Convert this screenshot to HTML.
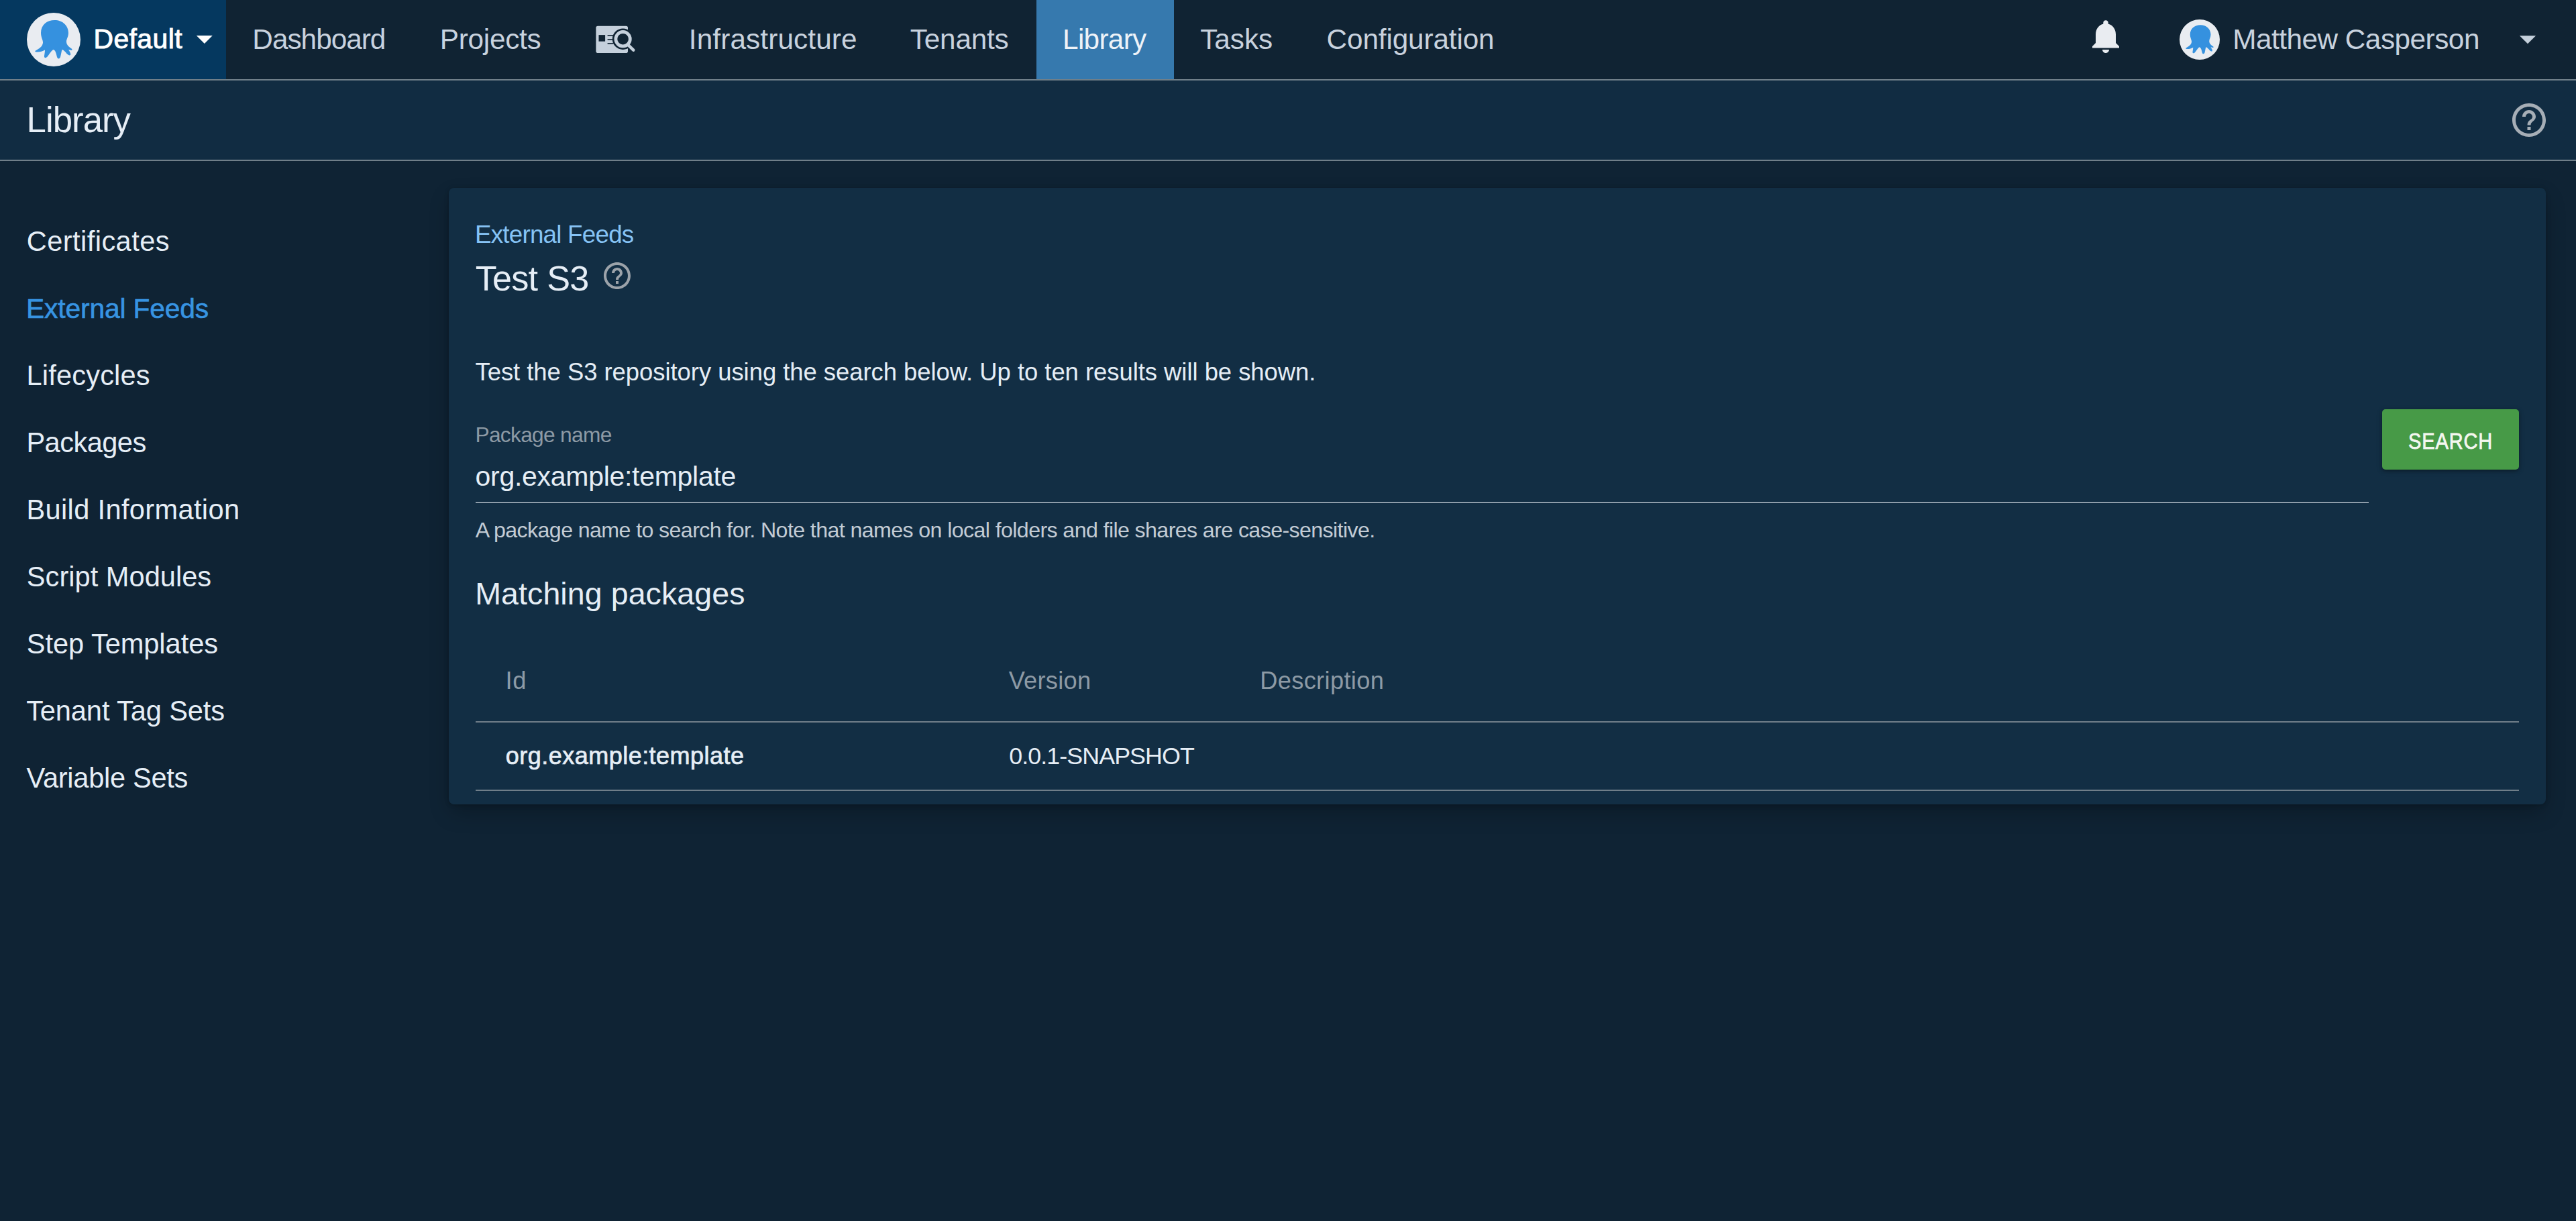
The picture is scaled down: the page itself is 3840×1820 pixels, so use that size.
<!DOCTYPE html>
<html><head><meta charset="utf-8"><title>Library - External Feeds - Test S3</title>
<style>
html,body{margin:0;padding:0;}
body{width:3840px;height:1820px;overflow:hidden;background:#0f2334;position:relative;font-family:"Liberation Sans",sans-serif;}
.t{position:absolute;white-space:pre;font-family:"Liberation Sans",sans-serif;}
svg{position:absolute;display:block;}
</style></head><body>
<div style="position:absolute;left:0px;top:0px;width:3840px;height:118px;background:#102333;"></div>
<div style="position:absolute;left:0px;top:118px;width:3840px;height:2px;background:#707f89;"></div>
<div style="position:absolute;left:0px;top:0px;width:337px;height:118px;background:#05385f;"></div>
<div style="position:absolute;left:1545px;top:0px;width:205px;height:118px;background:#3679ae;"></div>
<div style="position:absolute;left:0px;top:120px;width:3840px;height:118px;background:#112c42;"></div>
<div style="position:absolute;left:0px;top:238px;width:3840px;height:2px;background:#707f89;"></div>
<div style="position:absolute;left:669px;top:280px;width:3126px;height:919px;background:#122e44;border-radius:8px;box-shadow:0 1px 6px rgba(0,0,0,0.22),0 14px 32px -4px rgba(0,0,0,0.28);"></div>
<div style="position:absolute;left:709px;top:748px;width:2822px;height:2px;background:#8e9daa;"></div>
<div style="position:absolute;left:3551px;top:610px;width:204px;height:90px;background:#479a47;border-radius:5px;box-shadow:0 2px 5px rgba(0,0,0,0.3),0 2px 10px rgba(0,0,0,0.15);"></div>
<div style="position:absolute;left:709px;top:1075px;width:3046px;height:2px;background:#6f7e89;"></div>
<div style="position:absolute;left:709px;top:1177px;width:3046px;height:2px;background:#6f7e89;"></div>
<svg style="left:40px;top:19px" width="80" height="80" viewBox="0 0 80 80"><circle cx="40" cy="40" r="40" fill="#e9ecf1"/><path d="M21 30C21 18 30 11 41.5 11C53 11 62 19 62 30C62 36 59 39 59 43C59 48 63 51 66 53C68 54.5 68 56 66.5 56L62 55C64 58 66 61 65 63C63 64.5 60 62 58 59C56 57 54 55 52.5 55C51.5 58 51 62 50 66C49 69 46 69.5 45 66C44 62 43 56 39.6 55C37 56 34 61 31 65C28.5 68 25.5 68 26 64C26.5 61 27 58 27 55.5C23 57.5 19 59 14 58.5C11.5 58 12 57 14 56C18 53.5 23 51 24 45C24.5 41 21 37 21 30Z" fill="#3591df"/></svg>
<svg style="left:276.2px;top:29px" width="57.6" height="57.6" viewBox="0 0 24 24"><path d="M7 10l5 5 5-5z" fill="#ffffff"/></svg>
<svg style="left:880px;top:30px" width="75" height="60" viewBox="880 30 75 60">
<rect x="888.4" y="38.8" width="47.6" height="40.3" rx="2.8" fill="#c5d0dc"/>
<rect x="892.5" y="52.1" width="9.6" height="9.6" fill="#102333"/>
<rect x="905.6" y="52.1" width="9" height="1.6" fill="#102333"/>
<rect x="905.6" y="58.2" width="9" height="1.6" fill="#102333"/>
<rect x="905.6" y="64.1" width="9" height="1.6" fill="#102333"/>
<line x1="937" y1="68" x2="944.2" y2="74.6" stroke="#102333" stroke-width="8" stroke-linecap="round"/>
<circle cx="928.6" cy="58.2" r="15.8" fill="#102333"/>
<circle cx="928.6" cy="58.2" r="10.7" fill="none" stroke="#c5d0dc" stroke-width="4.8"/>
<line x1="936.5" y1="67.2" x2="944.2" y2="74.6" stroke="#c5d0dc" stroke-width="4.6" stroke-linecap="round"/>
</svg>
<svg style="left:3109px;top:23.75px" width="60" height="60" viewBox="0 0 24 24"><path d="M12 22c1.1 0 2-.9 2-2h-4c0 1.1.89 2 2 2zm6-6v-5c0-3.07-1.64-5.64-4.5-6.32V4c0-.83-.67-1.5-1.5-1.5s-1.5.67-1.5 1.5v.68C7.63 5.36 6 7.92 6 11v5l-2 2v1h16v-1l-2-2z" fill="#e9ecf1"/></svg>
<svg style="left:3249px;top:29px" width="60" height="60" viewBox="0 0 80 80"><circle cx="40" cy="40" r="40" fill="#e9ecf1"/><path d="M21 30C21 18 30 11 41.5 11C53 11 62 19 62 30C62 36 59 39 59 43C59 48 63 51 66 53C68 54.5 68 56 66.5 56L62 55C64 58 66 61 65 63C63 64.5 60 62 58 59C56 57 54 55 52.5 55C51.5 58 51 62 50 66C49 69 46 69.5 45 66C44 62 43 56 39.6 55C37 56 34 61 31 65C28.5 68 25.5 68 26 64C26.5 61 27 58 27 55.5C23 57.5 19 59 14 58.5C11.5 58 12 57 14 56C18 53.5 23 51 24 45C24.5 41 21 37 21 30Z" fill="#3591df"/></svg>
<svg style="left:3739px;top:29px" width="58" height="58" viewBox="0 0 24 24"><path d="M7 10l5 5 5-5z" fill="#c5d0dc"/></svg>
<svg style="left:3740px;top:149px" width="60" height="60" viewBox="0 0 24 24"><path d="M11 18h2v-2h-2v2zm1-16C6.48 2 2 6.48 2 12s4.48 10 10 10 10-4.48 10-10S17.52 2 12 2zm0 18c-4.41 0-8-3.59-8-8s3.59-8 8-8 8 3.59 8 8-3.59 8-8 8zm0-14c-2.21 0-4 1.79-4 4h2c0-1.1.9-2 2-2s2 .9 2 2c0 2-3 1.75-3 5h2c0-2.25 3-2.5 3-5 0-2.21-1.79-4-4-4z" fill="#a6aeb6"/></svg>
<svg style="left:896px;top:387px" width="48" height="48" viewBox="0 0 24 24"><path d="M11 18h2v-2h-2v2zm1-16C6.48 2 2 6.48 2 12s4.48 10 10 10 10-4.48 10-10S17.52 2 12 2zm0 18c-4.41 0-8-3.59-8-8s3.59-8 8-8 8 3.59 8 8-3.59 8-8 8zm0-14c-2.21 0-4 1.79-4 4h2c0-1.1.9-2 2-2s2 .9 2 2c0 2-3 1.75-3 5h2c0-2.25 3-2.5 3-5 0-2.21-1.79-4-4-4z" fill="#9ca3aa"/></svg>
<div class="t" style="left:139.47px;top:38.45px;font-size:40.8px;line-height:40.8px;letter-spacing:0.469px;color:#ffffff;font-weight:400;-webkit-text-stroke:1.0px #ffffff;">Default</div>
<div class="t" style="left:376.36px;top:38.0px;font-size:42.32px;line-height:42.32px;letter-spacing:-0.997px;color:#c8d2de;font-weight:400;">Dashboard</div>
<div class="t" style="left:655.66px;top:38.0px;font-size:42.32px;line-height:42.32px;letter-spacing:-0.251px;color:#c8d2de;font-weight:400;">Projects</div>
<div class="t" style="left:1026.85px;top:38.0px;font-size:42.32px;line-height:42.32px;letter-spacing:0.11px;color:#c8d2de;font-weight:400;">Infrastructure</div>
<div class="t" style="left:1356.82px;top:38.0px;font-size:42.32px;line-height:42.32px;letter-spacing:-0.206px;color:#c8d2de;font-weight:400;">Tenants</div>
<div class="t" style="left:1584.06px;top:38.0px;font-size:42.32px;line-height:42.32px;letter-spacing:-0.696px;color:#eef3f8;font-weight:400;">Library</div>
<div class="t" style="left:1789.22px;top:38.0px;font-size:42.32px;line-height:42.32px;letter-spacing:-0.034px;color:#c8d2de;font-weight:400;">Tasks</div>
<div class="t" style="left:1977.62px;top:38.0px;font-size:42.32px;line-height:42.32px;letter-spacing:-0.14px;color:#c8d2de;font-weight:400;">Configuration</div>
<div class="t" style="left:3328.16px;top:38.0px;font-size:42.32px;line-height:42.32px;letter-spacing:-0.501px;color:#c8d2de;font-weight:400;">Matthew Casperson</div>
<div class="t" style="left:39.62px;top:153.1px;font-size:52.75px;line-height:52.75px;letter-spacing:-0.981px;color:#e6eef6;font-weight:400;">Library</div>
<div class="t" style="left:39.82px;top:338.8px;font-size:41.59px;line-height:41.59px;letter-spacing:0.431px;color:#e6eef6;font-weight:400;">Certificates</div>
<div class="t" style="left:39.08px;top:439.5px;font-size:40.72px;line-height:40.72px;letter-spacing:-0.135px;color:#3794e2;font-weight:400;-webkit-text-stroke:0.6px #3794e2;">External Feeds</div>
<div class="t" style="left:39.51px;top:538.8px;font-size:41.59px;line-height:41.59px;letter-spacing:0.171px;color:#e6eef6;font-weight:400;">Lifecycles</div>
<div class="t" style="left:39.41px;top:638.8px;font-size:41.59px;line-height:41.59px;letter-spacing:-0.537px;color:#e6eef6;font-weight:400;">Packages</div>
<div class="t" style="left:39.41px;top:738.8px;font-size:41.59px;line-height:41.59px;letter-spacing:0.353px;color:#e6eef6;font-weight:400;">Build Information</div>
<div class="t" style="left:39.82px;top:838.8px;font-size:41.59px;line-height:41.59px;letter-spacing:0.027px;color:#e6eef6;font-weight:400;">Script Modules</div>
<div class="t" style="left:39.82px;top:938.8px;font-size:41.59px;line-height:41.59px;letter-spacing:-0.049px;color:#e6eef6;font-weight:400;">Step Templates</div>
<div class="t" style="left:39.13px;top:1038.8px;font-size:41.59px;line-height:41.59px;letter-spacing:-0.106px;color:#e6eef6;font-weight:400;">Tenant Tag Sets</div>
<div class="t" style="left:39.62px;top:1138.8px;font-size:41.59px;line-height:41.59px;letter-spacing:-0.288px;color:#e6eef6;font-weight:400;">Variable Sets</div>
<div class="t" style="left:707.99px;top:332.2px;font-size:36.81px;line-height:36.81px;letter-spacing:-0.787px;color:#86c3f5;font-weight:400;">External Feeds</div>
<div class="t" style="left:708.65px;top:389.0px;font-size:52.17px;line-height:52.17px;letter-spacing:-0.73px;color:#e6eef6;font-weight:400;">Test S3</div>
<div class="t" style="left:708.48px;top:537.05px;font-size:36.45px;line-height:36.45px;letter-spacing:-0.035px;color:#e6eef6;font-weight:400;">Test the S3 repository using the search below. Up to ten results will be shown.</div>
<div class="t" style="left:708.49px;top:632.8px;font-size:31.74px;line-height:31.74px;letter-spacing:-0.716px;color:#8d9aa5;font-weight:400;">Package name</div>
<div class="t" style="left:708.51px;top:689.9px;font-size:41.0px;line-height:41.0px;letter-spacing:-0.285px;color:#e6eef6;font-weight:400;">org.example:template</div>
<div class="t" style="left:708.63px;top:773.9px;font-size:32.17px;line-height:32.17px;letter-spacing:-0.598px;color:#c3ccd5;font-weight:400;">A package name to search for. Note that names on local folders and file shares are case-sensitive.</div>
<div class="t" style="left:708.28px;top:861.9px;font-size:46.52px;line-height:46.52px;letter-spacing:0.086px;color:#e6eef6;font-weight:400;">Matching packages</div>
<div class="t" style="left:753.45px;top:996.9px;font-size:36.38px;line-height:36.38px;letter-spacing:0.675px;color:#8d9aa5;font-weight:400;">Id</div>
<div class="t" style="left:1503.65px;top:996.9px;font-size:36.23px;line-height:36.23px;letter-spacing:0.264px;color:#8d9aa5;font-weight:400;">Version</div>
<div class="t" style="left:1878.22px;top:996.9px;font-size:36.23px;line-height:36.23px;letter-spacing:0.342px;color:#8d9aa5;font-weight:400;">Description</div>
<div class="t" style="left:753.81px;top:1108.65px;font-size:36.0px;line-height:36.0px;letter-spacing:0.476px;color:#e6eef6;font-weight:400;-webkit-text-stroke:0.7px #e6eef6;">org.example:template</div>
<div class="t" style="left:1504.31px;top:1109.7px;font-size:35.8px;line-height:35.8px;letter-spacing:-0.921px;color:#e6eef6;font-weight:400;">0.0.1-SNAPSHOT</div>
<div class="t" style="left:3590.48px;top:641.4px;font-size:33.26px;line-height:33.26px;letter-spacing:1.0px;color:#f4f7ef;font-weight:400;-webkit-text-stroke:0.8px #f4f7ef;transform:scaleX(0.8722);transform-origin:0 0;">SEARCH</div>
</body></html>
